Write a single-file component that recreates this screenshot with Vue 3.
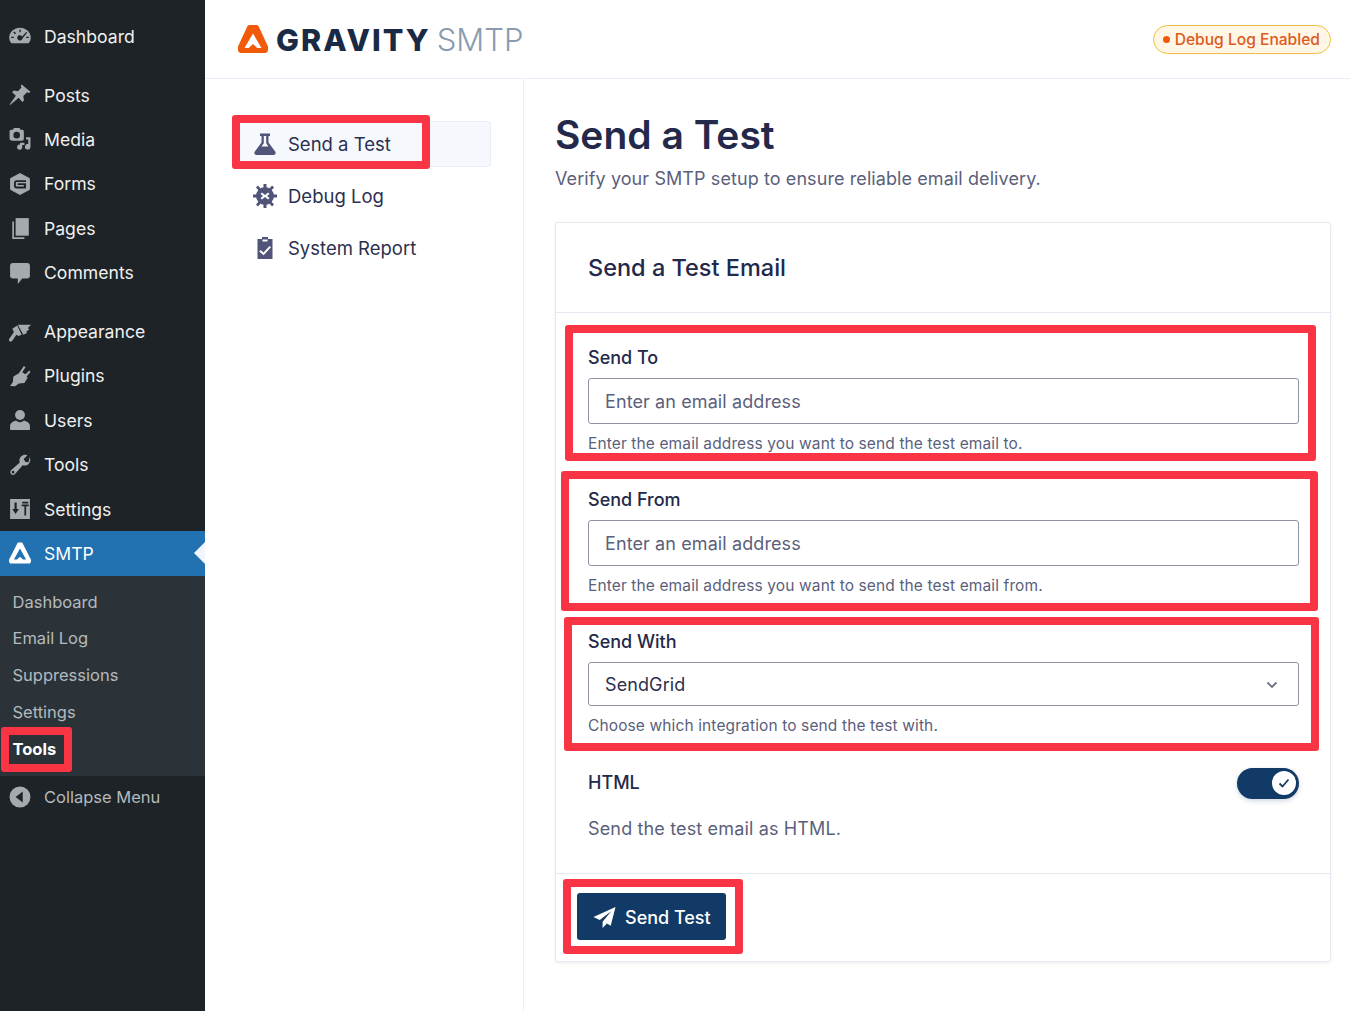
<template>
  <div class="page-root">
    <!-- ===== WP 侧栏 ===== -->
    <aside class="wp-menu">
      <div v-for="group in menuGroups" :key="group[0].label" class="menu-group">
        <div
          v-for="item in group"
          :key="item.label"
          :class="['menu-item', item.active && 'active']"
        >
          <svg class="menu-icon" viewBox="0 0 20 20" v-html="item.icon"></svg>
          <span>{{ item.label }}</span>
        </div>
      </div>

      <div class="submenu">
        <div
          v-for="sub in subMenu"
          :key="sub"
          :class="['sub-item', sub === 'Tools' && 'current']"
        >
          {{ sub }}
          <span v-if="sub === 'Tools'" class="mark mark-tools"></span>
        </div>
      </div>

      <div class="menu-item collapse">
        <svg class="menu-icon" viewBox="0 0 20 20">
          <path d="M10 .5a9.5 9.5 0 1 1 0 19 9.500 9.500 0 0 1 0-19zM12.500 5 6 10l6.500 5z" fill-rule="evenodd" />
        </svg>
        <span>Collapse Menu</span>
      </div>
    </aside>

    <div class="main">
      <!-- ===== Header ===== -->
      <header class="top-bar">
        <div class="logo">
          <svg class="logo-mark" viewBox="0 0 30 28">
            <path d="M11 0h8l1.500 1L30 21.500V26l-2 2H2l-2-2v-4.500L9.500 1z" fill="#f15a0a" />
            <path d="M15 8.500 6.500 23h4.200L15 19l4.300 4h4.200z" fill="#fff" />
          </svg>
          <span class="logo-bold">GRAVITY</span>
          <span class="logo-light">SMTP</span>
        </div>
        <div class="debug-pill"><span class="pill-dot"></span>Debug Log Enabled</div>
      </header>

      <div class="body-row">
        <!-- ===== 子导航 ===== -->
        <nav class="side-nav">
          <div
            v-for="nav in navItems"
            :key="nav.label"
            :class="['nav-item', nav.active && 'active']"
          >
            <svg class="nav-icon" viewBox="0 0 24 24" v-html="nav.icon"></svg>
            <span>{{ nav.label }}</span>
            <span v-if="nav.active" class="mark mark-nav"></span>
          </div>
        </nav>

        <!-- ===== 主体 ===== -->
        <section class="content">
          <h1 class="page-title">Send a Test</h1>
          <p class="page-desc">Verify your SMTP setup to ensure reliable email delivery.</p>

          <div class="card">
            <div class="card-header">Send a Test Email</div>

            <div class="card-body">
              <div v-for="field in fields" :key="field.label" class="field">
                <span class="mark" :class="field.mark"></span>
                <label class="field-label">{{ field.label }}</label>
                <div :class="['input', field.select && 'select']">
                  {{ field.value }}
                  <svg v-if="field.select" class="chevron" viewBox="0 0 12 8">
                    <path d="M1.500 1.500 6 6l4.500-4.500" fill="none" stroke="#6b7280" stroke-width="1.800" />
                  </svg>
                </div>
                <div class="field-help">{{ field.help }}</div>
              </div>

              <div class="toggle-row">
                <span class="field-label">HTML</span>
                <div class="toggle">
                  <span class="knob">
                    <svg viewBox="0 0 12 10" class="knob-check">
                      <path d="M1.500 5.500 4.500 8.500 10.500 1.500" fill="none" stroke="#1a3a5c" stroke-width="1.800" />
                    </svg>
                  </span>
                </div>
              </div>
              <div class="toggle-desc">Send the test email as HTML.</div>
            </div>

            <div class="card-footer">
              <button class="send-btn">
                <span class="mark mark-btn"></span>
                <svg viewBox="0 0 24 24" class="send-icon">
                  <path d="M23.500 1 .5 11.500l6.500 3.200L19 5.500 10 16.500v6.500l4.500-4.800 4 2.300z" fill="#fff" />
                </svg>
                Send Test
              </button>
            </div>
          </div>
        </section>
      </div>
    </div>
  </div>
</template>

<script setup>
const menuGroups = [
  [
    {
      label: 'Dashboard',
      icon: '<path fill-rule="evenodd" d="M10 2.500c5.200 0 9.800 3.900 9.800 8.800 0 2-.8 3.900-2 5.200H2.200C1 15.200.2 13.300.2 11.300.2 6.400 4.800 2.500 10 2.500zM9.500 4.200v2.300h1.200V4.200zM5 5.800 3.900 6.700l1.500 1.700 1-.9zm10.800.3-3.800 4.400a2.400 2.400 0 1 0-3.100 3.300 2.400 2.400 0 0 0 3.400-1.600l4.200-5.300zM2 10.600v1.300h2.400v-1.300zm13.600 0v1.300H18v-1.300z"/>'
    }
  ],
  [
    {
      label: 'Posts',
      icon: '<path d="M11.500.5 19.500 7l-1.300 1.200-1.800-.7-3.400 3.500.6 4-1.500 1.300-3.300-3.700L1 19l-.4-.4 5.600-8-3.300-3.200L4.200 6l3.900.5 3.300-3.400-.8-1.600z"/>'
    },
    {
      label: 'Media',
      icon: '<path fill-rule="evenodd" d="M2 1.500h1.500L4.500 0h5l1 1.500H12A1.500 1.500 0 0 1 13.500 3v7a1.500 1.500 0 0 1-1.500 1.500H3A2.500 2.500 0 0 1 .5 9V3a1.500 1.500 0 0 1 1.500-1.500zM7 3.500a3 3 0 1 0 0 6 3 3 0 0 0 0-6z"/><path d="M19.500 8.500V17a2.500 2.500 0 1 1-2-2.400V10.500h-2V8.500zM12 15.500v1.800a2.300 2.300 0 1 1-2-2.200v-1.600h4v2z"/>'
    },
    {
      label: 'Forms',
      icon: '<path fill-rule="evenodd" d="M10 0l8.500 4.500a1.500 1.500 0 0 1 .5 1v9a1.500 1.500 0 0 1-.5 1L10 20l-8.500-4.500a1.500 1.500 0 0 1-.5-1v-9a1.500 1.500 0 0 1 .5-1zM7 6.500A2.500 2.500 0 0 0 4.500 9v2.500A2.500 2.500 0 0 0 7 14h8.500V9.300H7.800v1.700h5.700v1.200H7a.8.8 0 0 1-.8-.8V9a.8.8 0 0 1 .8-.8h8.500V6.500z"/>'
    },
    {
      label: 'Pages',
      icon: '<path d="M6 1h12v16H6z"/><path d="M3 4h1.500v14.500H14V20H3z"/>'
    },
    {
      label: 'Comments',
      icon: '<path d="M3.500 1h13A2.500 2.500 0 0 1 19 3.500v9a2.500 2.500 0 0 1-2.500 2.500H12l-4 5v-5H3.500A2.500 2.500 0 0 1 1 12.500v-9A2.500 2.500 0 0 1 3.500 1z"/>'
    }
  ],
  [
    {
      label: 'Appearance',
      icon: '<path d="M8 3.500h12l-3 3 1.500 1-3 2.500 1 1-3.500 1.500z"/><path d="M7.500 4 11.500 12.500l-3 1.200-1.800-1.200L3 18a1.700 1.700 0 0 1-3-1.500L4.500 10 3 7z"/>'
    },
    {
      label: 'Plugins',
      icon: '<path d="M13.500 1 15 2l-3 4.500 3 2 3.500-3.500 1 1.300L16 10.500l1 .8-3 5-5 .5-3.500 2.500L1 19l2.500-3.500.5-5 5-3z"/>'
    },
    {
      label: 'Users',
      icon: '<circle cx="10" cy="5.500" r="4.500"/><path d="M6.500 10.500c1 1 2.200 1.500 3.500 1.500s2.500-.5 3.500-1.500c3 .8 5.500 2.500 5.500 5V19H1v-3.500c0-2.500 2.500-4.200 5.500-5z"/>'
    },
    {
      label: 'Tools',
      icon: '<path fill-rule="evenodd" d="M18.800 2.800c1 2.300.6 4.700-1 6.300-1.500 1.500-3.600 1.800-5.400 1.100L5.300 18.400a2.500 2.500 0 0 1-3.700-3.300l8.200-7.400c-.7-1.900-.3-4 1.200-5.500 1.600-1.500 3.900-1.900 5.800-1l-3.500 3.400 1.700 2.600 2.800.2zM3.700 15.300a1.200 1.200 0 1 0 0 2.400 1.200 1.200 0 0 0 0-2.400z"/>'
    },
    {
      label: 'Settings',
      icon: '<path fill-rule="evenodd" d="M1 1h18v18H1zM5 4v6H3l3 4.500L9 10H7V4zm6.500 2v1.600H14V16h1.600V7.600H18V6zM12 3.500V5h5.500V3.500z"/>'
    },
    {
      label: 'SMTP',
      active: true,
      icon: '<path d="M8 0.500h4L20.500 17l-1.500 2.500H1L-.5 17z"/><path d="M10 6 4.500 16h2.800l2.700-2.600L12.700 16h2.800z" fill="#2271b1"/>'
    }
  ]
]

const subMenu = ['Dashboard', 'Email Log', 'Suppressions', 'Settings', 'Tools']

const navItems = [
  {
    label: 'Send a Test',
    active: true,
    icon: '<path d="M7 1.500h10v2.500h-1.500v6.500L22.500 20a2.200 2.200 0 0 1-2 3h-17a2.200 2.200 0 0 1-2-3l7-9.500V4H7zM10.800 4v7.200L8.500 14.500h7l-2.300-3.300V4z" fill-rule="evenodd"/>'
  },
  {
    label: 'Debug Log',
    icon: '<path fill-rule="evenodd" d="M12 3a9 9 0 1 1 0 18 9 9 0 0 1 0-18zM9 8.500 7.500 10l2.500 2-2.500 2L9 15.500l3-2.500 3 2.500 1.500-1.500-2.500-2 2.500-2L15 8.500 12 11z"/><path d="M10.500 0h3v4h-3zM3 3.500 5 1.500 8 5 6 7zM21 3.500 19 1.500 16 5l2 2zM0 10.500h4v3H0zM20 10.500h4v3h-4zM3 20.500 5 22.500 8 19 6 17zM21 20.500 19 22.500 16 19l2-2zM10.500 20h3v4h-3z"/>'
  },
  {
    label: 'System Report',
    icon: '<path fill-rule="evenodd" d="M9 1h6v2h4.500v20h-15V3H9zM9.500 5.500h5V3.500h-5zM16.500 10l-6 6.500L7.500 14l-1.300 1.500 4.400 3.800 7.400-8z"/>'
  }
]

const fields = [
  {
    label: 'Send To',
    value: 'Enter an email address',
    help: 'Enter the email address you want to send the test email to.',
    mark: 'mark-to'
  },
  {
    label: 'Send From',
    value: 'Enter an email address',
    help: 'Enter the email address you want to send the test email from.',
    mark: 'mark-from'
  },
  {
    label: 'Send With',
    value: 'SendGrid',
    select: true,
    help: 'Choose which integration to send the test with.',
    mark: 'mark-with'
  }
]
</script>

<style>
html,
body {
  margin: 0;
  background: #fff;
}
</style>

<style scoped>
/* ===== 页面基础 ===== */
.page-root {
  display: flex;
  height: 1011px;
  overflow: hidden;
  font-family: Inter, "Liberation Sans", sans-serif;
  color: #23294a;
  background: #fff;
}

/* ===== WP 侧栏 ===== */
.wp-menu {
  width: 205px;
  flex-shrink: 0;
  background: #1d2327;
  padding-top: 14px;
}

.menu-group {
  margin-bottom: 14.500px;
}

.menu-group:nth-child(3) {
  margin-bottom: 0;
}

.menu-item {
  position: relative;
  display: flex;
  align-items: center;
  height: 44.400px;
  padding-left: 9px;
  gap: 13px;
  font-size: 17.600px;
  color: #f0f0f1;
}

.menu-icon {
  width: 22px;
  height: 22px;
  flex-shrink: 0;
  fill: #a7aaad;
}

.menu-item.active {
  background: #2271b1;
  color: #fff;
}

.menu-item.active .menu-icon {
  fill: #fff;
}

.menu-item.active::after {
  content: '';
  position: absolute;
  right: 0;
  top: 50%;
  margin-top: -11px;
  border: 11px solid transparent;
  border-right-color: #f0f6fc;
  border-left-width: 0;
}

.submenu {
  background: #2c3338;
  padding: 8px 0;
}

.sub-item {
  position: relative;
  width: max-content;
  min-width: 60px;
  height: 36.800px;
  line-height: 36.800px;
  padding-left: 12.500px;
  font-size: 16.500px;
  color: #b4b9be;
}

.sub-item.current {
  color: #fff;
  font-weight: 700;
}

.collapse {
  height: 42px;
  color: #b4b9be;
  font-size: 16.500px;
}

/* ===== Header ===== */
.main {
  flex: 1;
  min-width: 0;
  display: flex;
  flex-direction: column;
}

.top-bar {
  height: 78px;
  flex-shrink: 0;
  border-bottom: 1px solid #ecedf8;
  display: flex;
  align-items: center;
  justify-content: space-between;
  padding: 0 19px 0 33px;
}

.logo {
  display: flex;
  align-items: center;
  gap: 7px;
}

.logo-mark {
  width: 30px;
  height: 28px;
  margin-right: 1px;
}

.logo-bold {
  font-size: 30.500px;
  font-weight: 800;
  letter-spacing: 2.100px;
  color: #1a2a44;
}

.logo-light {
  margin-left: -1px;
  font-size: 31px;
  font-weight: 300;
  color: #8a9bb0;
}

.debug-pill {
  display: flex;
  align-items: center;
  gap: 5px;
  height: 29px;
  box-sizing: border-box;
  padding: 0 10px 0 9px;
  border: 1px solid #f0c040;
  border-radius: 15px;
  background: #fff6e5;
  color: #dc5a1e;
  font-size: 15.600px;
  font-weight: 500;
}

.pill-dot {
  width: 7px;
  height: 7px;
  border-radius: 50%;
  background: #f15a0a;
}

.body-row {
  flex: 1;
  display: flex;
  min-height: 0;
}

/* ===== 子导航 ===== */
.side-nav {
  width: 319px;
  flex-shrink: 0;
  box-sizing: border-box;
  border-right: 1px solid #ecedf8;
  padding: 42px 32px 0 33px;
  display: flex;
  flex-direction: column;
  gap: 6px;
}

.nav-item {
  position: relative;
  display: flex;
  align-items: center;
  height: 46px;
  box-sizing: border-box;
  padding-left: 14px;
  gap: 11px;
  font-size: 18.500px;
  color: #2c3050;
  border: 1px solid transparent;
  border-radius: 3px;
}

.nav-item.active {
  background: #f5f8fc;
  border-color: #e8eef6;
}

.nav-icon {
  width: 24px;
  height: 24px;
  fill: #4f5478;
}

/* ===== 主体 ===== */
.content {
  flex: 1;
  min-width: 0;
  padding: 33px 19px 0 31px;
}

.page-title {
  margin: 0;
  font-size: 39px;
  line-height: 46px;
  font-weight: 600;
  color: #23294a;
}

.page-desc {
  margin: 9px 0 31px;
  font-size: 18px;
  line-height: 24px;
  letter-spacing: .09px;
  color: #5b5f7c;
}

.card {
  border: 1px solid #e8e9f0;
  border-radius: 3px;
  box-shadow: 0 1px 3px rgba(28, 31, 63, .08);
}

.card-header {
  height: 90px;
  box-sizing: border-box;
  display: flex;
  align-items: center;
  padding-left: 32px;
  border-bottom: 1px solid #e8e9f0;
  font-size: 23.500px;
  font-weight: 500;
  color: #23294a;
}

.card-body {
  padding: 33px 31px 0 32px;
}

.field {
  position: relative;
  height: 142px;
}

.field-label {
  display: block;
  font-size: 18px;
  line-height: 24px;
  font-weight: 500;
  color: #23294a;
}

.input {
  position: relative;
  margin-top: 8px;
  height: 46px;
  box-sizing: border-box;
  display: flex;
  align-items: center;
  padding-left: 16px;
  border: 1px solid #9092a6;
  border-radius: 3px;
  font-size: 18px;
  letter-spacing: .1px;
  color: #5b5f7c;
}

.select {
  height: 44px;
  color: #2c3050;
}

.chevron {
  position: absolute;
  right: 20px;
  top: 18px;
  width: 12px;
  height: 8px;
}

.field-help {
  margin-top: 10px;
  font-size: 15.500px;
  line-height: 20px;
  letter-spacing: .12px;
  color: #5b5f7c;
}

.toggle-row {
  display: flex;
  align-items: center;
  justify-content: space-between;
  margin-top: -5px;
  height: 32px;
}

.toggle {
  width: 62px;
  height: 31px;
  border-radius: 16px;
  background: #123a66;
  display: flex;
  align-items: center;
  justify-content: flex-end;
  padding-right: 3px;
  box-sizing: border-box;
  box-shadow: 0 2px 5px rgba(18, 58, 102, .2);
}

.knob {
  width: 24px;
  height: 24px;
  border-radius: 50%;
  background: #fff;
  display: flex;
  align-items: center;
  justify-content: center;
}

.knob-check {
  width: 12px;
  height: 10px;
}

.toggle-desc {
  margin-top: 18px;
  font-size: 18px;
  line-height: 24px;
  letter-spacing: .15px;
  color: #5b5f7c;
}

.card-footer {
  margin-top: 32px;
  border-top: 1px solid #e8e9f0;
  padding: 19px 21px 21px;
}

.send-btn {
  position: relative;
  display: flex;
  align-items: center;
  gap: 9px;
  height: 47px;
  width: 149px;
  padding: 1px 0 0 16px;
  box-sizing: border-box;
  border: none;
  border-radius: 3px;
  background: #123a66;
  color: #fff;
  font-family: inherit;
  font-size: 18px;
  font-weight: 500;
}

.send-icon {
  width: 23px;
  height: 23px;
}

/* ===== 红色标注框 ===== */
.mark {
  position: absolute;
  box-sizing: border-box;
  border: 8px solid #f93444;
  border-radius: 3px;
  pointer-events: none;
}

.mark-tools {
  left: 1px;
  top: -4px;
  width: 71px;
  height: 45px;
}

.mark-nav {
  left: -7px;
  top: -7px;
  width: 198px;
  height: 54px;
}

.mark-to {
  left: -23px;
  top: -21px;
  width: 751px;
  height: 136px;
}

.mark-from {
  left: -27px;
  top: -17px;
  width: 757px;
  height: 140px;
}

.mark-with {
  left: -24px;
  top: -13px;
  width: 755px;
  height: 134px;
}

.mark-btn {
  left: -14px;
  top: -14px;
  width: 180px;
  height: 75px;
}
</style>
